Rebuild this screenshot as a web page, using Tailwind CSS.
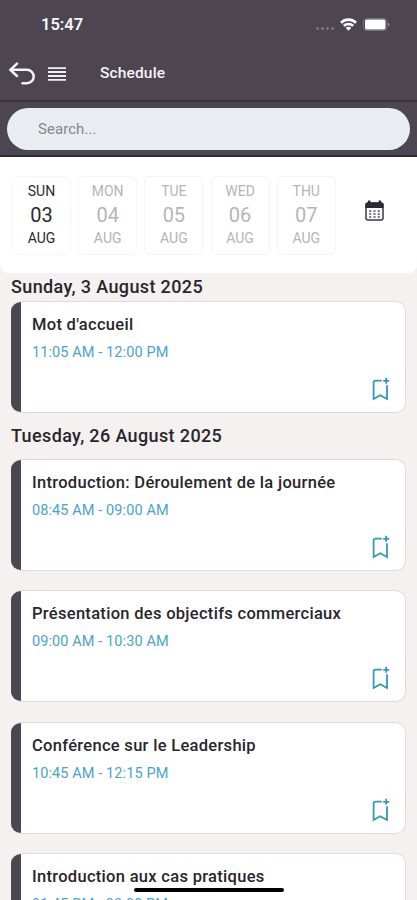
<!DOCTYPE html>
<html lang="en">
<head>
    <meta charset="UTF-8">
    <meta name="viewport" content="width=device-width, initial-scale=1.0">
    <title>Schedule</title>
    <script src="https://cdn.jsdelivr.net/npm/@tailwindcss/browser@4"></script>
</head>
<body class="bg-[#f5f1f1] font-[Roboto,sans-serif] text-[#28262c]">
    <div class="relative w-[417px] h-[900px] overflow-hidden">

        <!-- Status bar + navigation -->
        <header class="bg-[#4d4650] h-[102px] border-b-2 border-[#3d3640]">
            <div class="h-12 flex items-center justify-between pl-[41px] pr-[27px]">
                <span class="mt-[2px] text-[16.5px] leading-5 font-semibold text-[#f8f7f9]">15:47</span>
                <div class="flex items-center">
                    <div class="flex gap-[2px] mt-2 mr-[6px]">
                        <i class="size-[3px] rounded-full bg-[#7d7780]"></i>
                        <i class="size-[3px] rounded-full bg-[#7d7780]"></i>
                        <i class="size-[3px] rounded-full bg-[#7d7780]"></i>
                        <i class="size-[3px] rounded-full bg-[#7d7780]"></i>
                    </div>
                    <svg class="w-[17px] h-[13px] mr-[6px]" viewBox="0 0 17 13" fill="none" stroke="#fff" stroke-width="2.6">
                        <path d="M1 4.7a10.8 10.8 0 0 1 15 0"/>
                        <path d="M3.8 7.9a6.8 6.8 0 0 1 9.4 0"/>
                        <path d="M8.5 12.8 5.7 10a3.8 3.8 0 0 1 5.6 0z" fill="#fff" stroke="none"/>
                    </svg>
                    <svg class="w-[27px] h-[13px]" viewBox="0 0 27 13">
                        <rect x=".5" y=".5" width="23.5" height="12" rx="3" fill="none" stroke="#77717b"/>
                        <rect x="2" y="1.5" width="20.5" height="10" rx="1.5" fill="#fff"/>
                        <path d="M25.2 4.8c1.6.6 1.6 2.8 0 3.4z" fill="#a5a0a8"/>
                    </svg>
                </div>
            </div>
            <div class="h-[50px] flex items-center pl-[9px]">
                <svg class="mt-[2px] w-[26px] h-[24px]" viewBox="0 0 26 24" fill="none" stroke="#f5f3f7" stroke-width="2.5" stroke-linecap="round" stroke-linejoin="round">
                    <path d="M8 1.7 1.3 7.8 8 14M1.8 7.8H18a6.7 6.7 0 0 1 0 13.4h-4.5"/>
                </svg>
                <svg class="mt-[1px] ml-[13px] w-[18px] h-[14px]" viewBox="0 0 18 14" fill="#f0eef2">
                    <path d="M0 .3h18v1.8H0zM0 4.1h18v1.8H0zM0 8.1h18v1.8H0zM0 12h18v1.8H0z"/>
                </svg>
                <h1 class="ml-[34px] text-[15.5px] leading-5 font-medium tracking-[0.15px] text-[#f5f3f7]">Schedule</h1>
            </div>
        </header>

        <!-- Search -->
        <div class="bg-[#4d4650] h-[55px] px-[7px] pt-[6px] border-b-2 border-[#32283c]">
            <div class="h-[42px] rounded-full bg-[#e9edf1] pl-[31px] flex items-center text-[15px] tracking-[0.05px] text-[#85878b]">Search...</div>
        </div>

        <!-- Day picker -->
        <section class="bg-white h-[116px] rounded-b-lg pl-[12px] pt-[19px] flex">
            <div class="flex gap-[7.2px] text-center text-[14px] text-[#b5b5b7]">
                <div class="w-[59px] h-[79px] rounded-md border border-[#f7f7f8] text-[#2c2a31] flex flex-col items-center pt-[4px]">
                    <span class="leading-[21px]">SUN</span><span class="text-[20px] leading-[26px]">03</span><span class="leading-[21px]">AUG</span>
                </div>
                <div class="w-[59px] h-[79px] rounded-md border border-[#f5f5f6] flex flex-col items-center pt-[4px]">
                    <span class="leading-[21px]">MON</span><span class="text-[20px] leading-[26px]">04</span><span class="leading-[21px]">AUG</span>
                </div>
                <div class="w-[59px] h-[79px] rounded-md border border-[#f5f5f6] flex flex-col items-center pt-[4px]">
                    <span class="leading-[21px]">TUE</span><span class="text-[20px] leading-[26px]">05</span><span class="leading-[21px]">AUG</span>
                </div>
                <div class="w-[59px] h-[79px] rounded-md border border-[#f5f5f6] flex flex-col items-center pt-[4px]">
                    <span class="leading-[21px]">WED</span><span class="text-[20px] leading-[26px]">06</span><span class="leading-[21px]">AUG</span>
                </div>
                <div class="w-[59px] h-[79px] rounded-md border border-[#f5f5f6] flex flex-col items-center pt-[4px]">
                    <span class="leading-[21px]">THU</span><span class="text-[20px] leading-[26px]">07</span><span class="leading-[21px]">AUG</span>
                </div>
            </div>
            <svg class="ml-[29px] mt-[24px] w-[19px] h-[21px]" viewBox="0 0 19 21">
                <rect x="1" y="3" width="17" height="17" rx="2" fill="#fff" stroke="#3a3746" stroke-width="1.5"/>
                <path d="M.5 8V4.5q0-2 2-2h14q2 0 2 2V8zM3 .5h2.4v4H3zM13.6.5H16v4h-2.4z" fill="#2b2838"/>
                <path d="M4.2 10h2v2h-2zM8.5 10h2v2h-2zM12.8 10h2v2h-2zM4.2 13h2v2h-2zM8.5 13h2v2h-2zM12.8 13h2v2h-2zM4.2 16h2v2h-2zM8.5 16h2v2h-2zM12.8 16h2v2h-2z" fill="#777480"/>
            </svg>
        </section>

        <!-- Sessions -->
        <main class="pl-[11px] pr-[11px]">
            <h2 class="h-7 leading-[27px] text-[18px] font-medium tracking-[0.37px]">Sunday, 3 August 2025</h2>
            <div id="day-1" class="flex flex-col"></div>
            <h2 class="mt-[9px] h-[37px] leading-7 text-[18px] font-medium tracking-[0.37px]">Tuesday, 26 August 2025</h2>
            <div id="day-2" class="flex flex-col gap-[19.3px]"></div>
        </main>

        <!-- Home indicator -->
        <div class="absolute left-[134px] top-[888px] w-[150px] h-[4px] rounded-full bg-black"></div>
    </div>

    <template id="session">
        <article class="h-[112px] rounded-[10px] border border-[#dedbdc] border-l-0 bg-white flex overflow-hidden">
            <div class="w-[10px] bg-[#4d4650]"></div>
            <div class="flex-1 pl-[11px] pt-[11px]">
                <h3 class="text-[16.5px] leading-6 font-medium tracking-[0.3px] whitespace-nowrap"></h3>
                <p class="mt-[6px] text-[14.5px] leading-5 tracking-[0.1px] text-[#4ba3c7] whitespace-nowrap"></p>
                <svg class="ml-[340px] mt-[14px] w-[18px] h-[24px]" viewBox="0 0 18 24" fill="none" stroke="#3399b3" stroke-width="1.8">
                    <path d="M9.8 3.6H3.6Q1.6 3.6 1.6 5.6V22l6.7-3.8 6.7 3.8V8.2"/>
                    <path d="M14.2.8v6M11.2 3.8h6"/>
                </svg>
            </div>
        </article>
    </template>

    <script>
        const sessions = {
            'day-1': [["Mot d'accueil", '11:05 AM - 12:00 PM']],
            'day-2': [
                ['Introduction: Déroulement de la journée', '08:45 AM - 09:00 AM'],
                ['Présentation des objectifs commerciaux', '09:00 AM - 10:30 AM'],
                ['Conférence sur le Leadership', '10:45 AM - 12:15 PM'],
                ['Introduction aux cas pratiques', '01:45 PM - 03:00 PM']
            ]
        };
        for (const day in sessions) {
            sessions[day].forEach(([title, time]) => {
                const card = document.getElementById('session').content.cloneNode(true);
                card.querySelector('h3').textContent = title;
                card.querySelector('p').textContent = time;
                document.getElementById(day).appendChild(card);
            });
        }
    </script>
</body>
</html>
